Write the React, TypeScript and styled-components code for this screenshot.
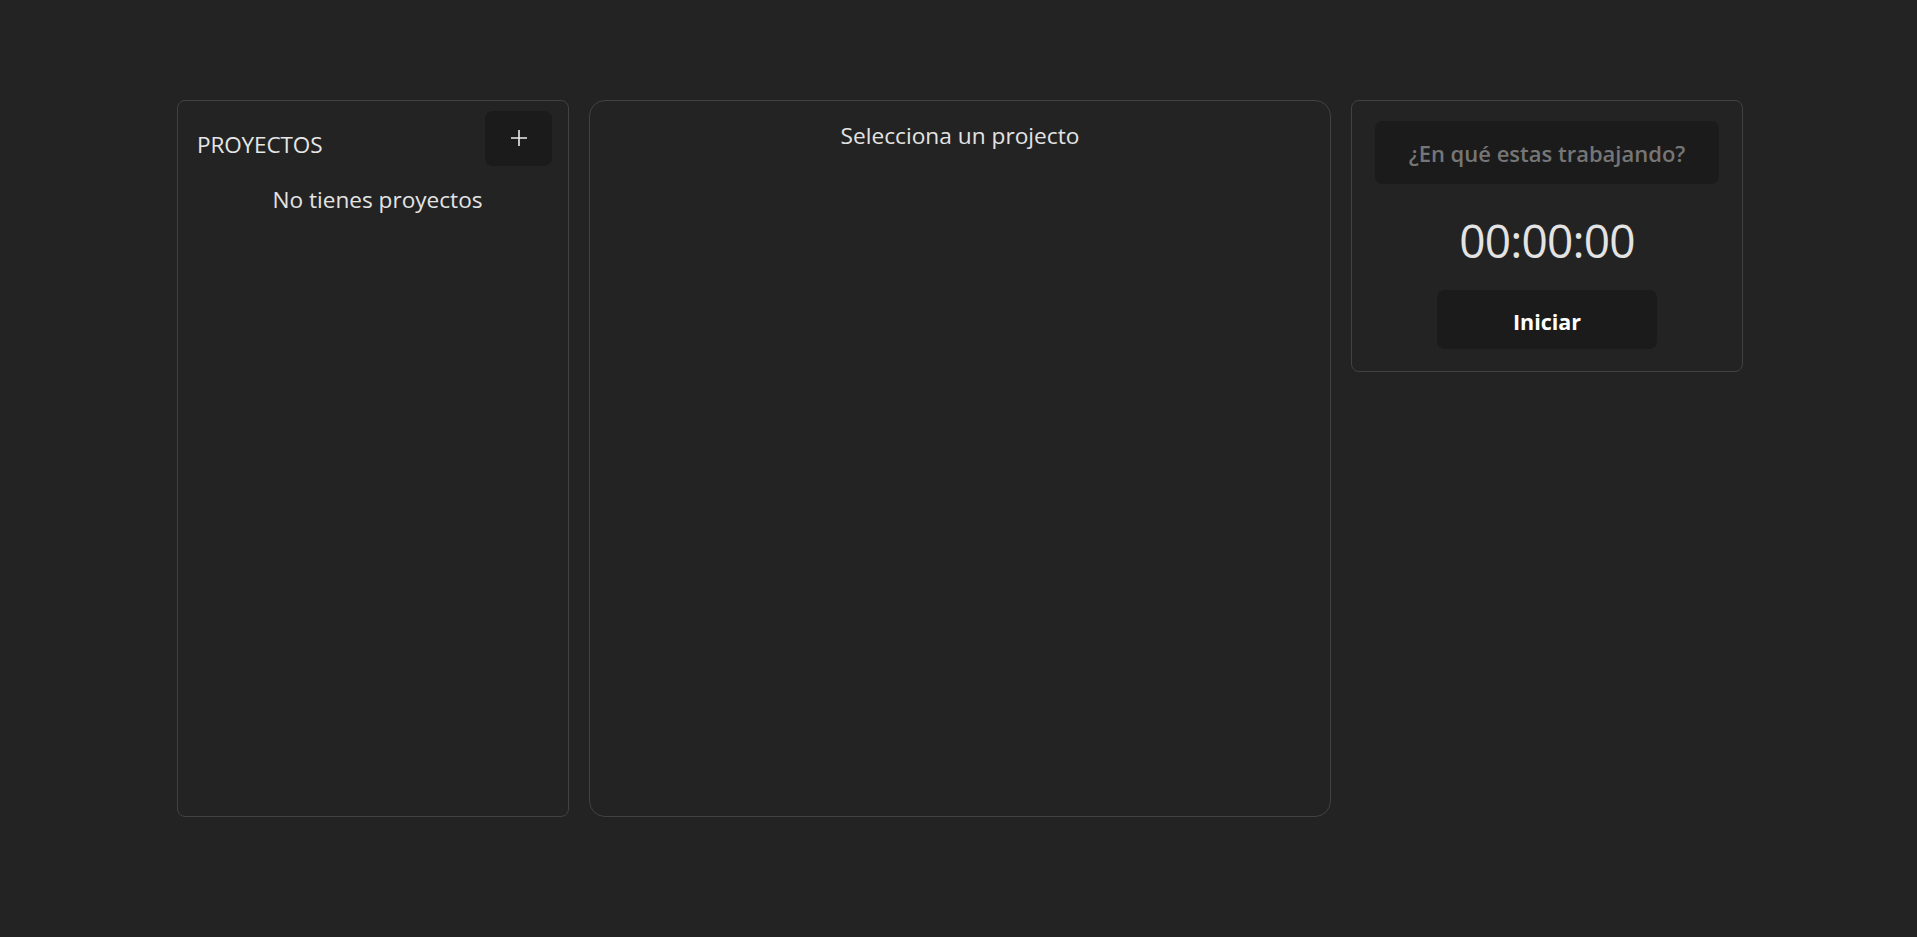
import React from "react";
import styled, { createGlobalStyle } from "styled-components";

const GlobalStyle = createGlobalStyle`
  * { box-sizing: border-box; }
  html, body {
    margin: 0;
    padding: 0;
    background: #232323;
    font-family: "Open Sans", "Noto Sans", sans-serif;
    color: #e3e3e3;
  }
`;

const Page = styled.main`
  display: flex;
  align-items: flex-start;
  gap: 20px;
  padding: 100px 0 0 177px;
  min-height: 937px;
`;

const Panel = styled.section<{ $width: number; $radius: number; $fixedHeight?: boolean }>`
  width: ${(p) => p.$width}px;
  height: ${(p) => (p.$fixedHeight ? "717px" : "auto")};
  border: 1px solid #424242;
  border-radius: ${(p) => p.$radius}px;
  background: #232323;
`;

const ProjectsPanel = styled(Panel)`
  padding: 10px 16px 0 19px;
`;

const Header = styled.div`
  display: flex;
  justify-content: space-between;
  align-items: flex-start;
`;

const Title = styled.h2`
  margin: 19px 0 0;
  font-size: 22.5px;
  font-weight: 400;
  line-height: 30px;
  color: #e6e6e6;
  letter-spacing: -0.1px;
`;

const AddButton = styled.button`
  width: 67px;
  height: 55px;
  border: none;
  border-radius: 8px;
  background: #1b1b1b;
  display: flex;
  align-items: center;
  justify-content: center;
  padding: 0 0 2px;
  cursor: pointer;
`;

const EmptyText = styled.p`
  margin: 19px 0 0;
  padding-left: 6px;
  text-align: center;
  font-size: 22.6px;
  line-height: 30px;
  color: #e3e3e3;
`;

const DetailPanel = styled(Panel)`
  padding-top: 20px;
  text-align: center;
`;

const DetailTitle = styled.p`
  margin: 0;
  font-size: 22.7px;
  line-height: 30px;
  color: #e3e3e3;
`;

const TimerPanel = styled(Panel)`
  padding: 20px 23px 22px;
  display: flex;
  flex-direction: column;
  align-items: center;
`;

const TaskInput = styled.input`
  width: 100%;
  height: 63px;
  border: none;
  outline: none;
  border-radius: 8px;
  background: #1b1b1b;
  text-align: center;
  font-family: "Open Sans", "Noto Sans", sans-serif;
  font-size: 22px;
  font-weight: 600;
  color: #e3e3e3;
  &::placeholder {
    color: #767676;
  }
`;

const Clock = styled.div`
  margin-top: 33px;
  font-size: 46px;
  line-height: 46px;
  font-weight: 400;
  color: #e3e3e3;
  letter-spacing: -0.8px;
`;

const StartButton = styled.button`
  margin-top: 27px;
  width: 220px;
  height: 59px;
  border: none;
  border-radius: 8px;
  background: #1b1b1b;
  color: #ffffff;
  font-family: "Open Sans", "Noto Sans", sans-serif;
  font-size: 21.5px;
  font-weight: 700;
  padding: 3px 0 0;
  cursor: pointer;
`;

const PlusIcon = () => (
  <svg width="16" height="16" viewBox="0 0 16 16" aria-hidden="true">
    <path d="M8 0v16M0 8h16" stroke="#ececec" strokeWidth="1.6" fill="none" />
  </svg>
);

export default function App() {
  return (
    <>
      <GlobalStyle />
      <Page>
        <ProjectsPanel $width={392} $radius={8} $fixedHeight>
          <Header>
            <Title>PROYECTOS</Title>
            <AddButton aria-label="Añadir proyecto">
              <PlusIcon />
            </AddButton>
          </Header>
          <EmptyText>No tienes proyectos</EmptyText>
        </ProjectsPanel>
        <DetailPanel $width={742} $radius={16} $fixedHeight>
          <DetailTitle>Selecciona un projecto</DetailTitle>
        </DetailPanel>
        <TimerPanel $width={392} $radius={8}>
          <TaskInput placeholder="¿En qué estas trabajando?" />
          <Clock>00:00:00</Clock>
          <StartButton>Iniciar</StartButton>
        </TimerPanel>
      </Page>
    </>
  );
}
